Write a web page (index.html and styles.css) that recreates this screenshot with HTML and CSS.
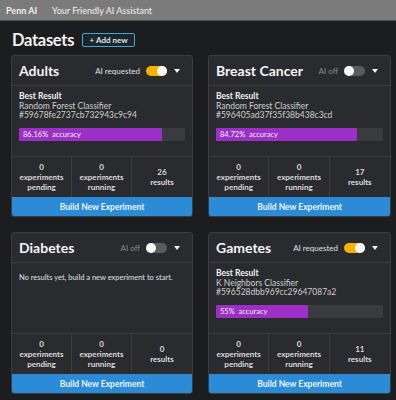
FILE: index.html
```html
<!DOCTYPE html>
<html lang="en">
  <head>
    <meta charset="UTF-8" />
    <meta name="viewport" content="width=device-width, initial-scale=1.0" />
    <title>Penn AI - Datasets</title>
    <link rel="stylesheet" href="styles.css">
  </head>
  <body>
    <div class="topbar">
      <span class="brand">Penn AI</span>
      <span class="tagline">Your Friendly AI Assistant</span>
    </div>
    <div class="page-head">
      <h1>Datasets</h1>
      <button class="add-btn">+ Add new</button>
    </div>
    <div class="grid">
      <div class="card">
        <div class="card-head">
          <span class="title">Adults</span>
          <span class="ai-label">AI requested</span>
          <span class="toggle on"><span class="knob"></span></span>
          <span class="caret"></span>
        </div>
        <div class="card-body">
          <div class="best">Best Result</div>
          <div class="line">Random Forest Classifier</div>
          <div class="line">#59678fe2737cb732943c9c94</div>
          <div class="bar"><div class="fill" style="width: 86.16%">86.16%&nbsp; accuracy</div></div>
        </div>
        <div class="stats">
          <div class="stat">0<br />experiments<br />pending</div>
          <div class="stat">0<br />experiments<br />running</div>
          <div class="stat">26<br />results</div>
        </div>
        <button class="build-btn">Build New Experiment</button>
      </div>

      <div class="card">
        <div class="card-head">
          <span class="title">Breast Cancer</span>
          <span class="ai-label off">AI off</span>
          <span class="toggle"><span class="knob"></span></span>
          <span class="caret"></span>
        </div>
        <div class="card-body">
          <div class="best">Best Result</div>
          <div class="line">Random Forest Classifier</div>
          <div class="line">#596405ad37f35f38b438c3cd</div>
          <div class="bar"><div class="fill" style="width: 84.72%">84.72%&nbsp; accuracy</div></div>
        </div>
        <div class="stats">
          <div class="stat">0<br />experiments<br />pending</div>
          <div class="stat">0<br />experiments<br />running</div>
          <div class="stat">17<br />results</div>
        </div>
        <button class="build-btn">Build New Experiment</button>
      </div>

      <div class="card">
        <div class="card-head">
          <span class="title">Diabetes</span>
          <span class="ai-label off">AI off</span>
          <span class="toggle"><span class="knob"></span></span>
          <span class="caret"></span>
        </div>
        <div class="card-body">
          <div class="empty">No results yet, build a new experiment to start.</div>
        </div>
        <div class="stats">
          <div class="stat">0<br />experiments<br />pending</div>
          <div class="stat">0<br />experiments<br />running</div>
          <div class="stat">0<br />results</div>
        </div>
        <button class="build-btn">Build New Experiment</button>
      </div>

      <div class="card">
        <div class="card-head">
          <span class="title">Gametes</span>
          <span class="ai-label">AI requested</span>
          <span class="toggle on"><span class="knob"></span></span>
          <span class="caret"></span>
        </div>
        <div class="card-body">
          <div class="best">Best Result</div>
          <div class="line">K Neighbors Classifier</div>
          <div class="line">#596528dbb969cc29647087a2</div>
          <div class="bar"><div class="fill" style="width: 55%">55%&nbsp; accuracy</div></div>
        </div>
        <div class="stats">
          <div class="stat">0<br />experiments<br />pending</div>
          <div class="stat">0<br />experiments<br />running</div>
          <div class="stat">11<br />results</div>
        </div>
        <button class="build-btn">Build New Experiment</button>
      </div>
    </div>
  </body>
</html>
```

FILE: styles.css
```css
* {
  margin: 0;
  padding: 0;
  box-sizing: border-box;
}
body {
  background-color: #1c1d1f;
  color: #e6e6e6;
  font-family: Lato, "Open Sans", sans-serif;
}
.topbar {
  height: 21px;
  background-color: #7b7b7b;
  border-bottom: 1px solid #505050;
  display: flex;
  align-items: center;
  font-size: 9px;
  color: #f0f0f0;
}
.brand {
  font-weight: bold;
  padding-left: 6px;
  width: 52px;
}
.page-head {
  display: flex;
  align-items: center;
  padding: 4px 0 0 12px;
  height: 34px;
}
h1 {
  font-size: 16.5px;
  font-weight: bold;
  letter-spacing: -0.3px;
  color: #f2f2f2;
}
.add-btn {
  margin-left: 8px;
  height: 14px;
  width: 53px;
  background-color: #1c252b;
  border: 1.5px solid #4ba3cf;
  border-radius: 2px;
  color: #d4eaf5;
  font-family: Lato, sans-serif;
  font-size: 8px;
  font-weight: bold;
}
.grid {
  display: grid;
  grid-template-columns: 182px 183px;
  column-gap: 15px;
  row-gap: 15px;
  padding: 0 0 0 11px;
}
.card {
  background-color: #2a2b2e;
  border: 1px solid #3b3c3f;
  border-radius: 3px;
  display: flex;
  flex-direction: column;
}
.card-head {
  height: 30px;
  display: flex;
  align-items: center;
  padding: 0 12px 0 7px;
  border-bottom: 1px solid #3b3c3f;
}
.title {
  font-size: 14px;
  font-weight: bold;
  color: #f4f4f4;
  flex: 1;
}
.ai-label {
  font-size: 8px;
  color: #e0e0e0;
  margin-right: 6px;
}
.ai-label.off {
  color: #8a8a8a;
}
.toggle {
  width: 21px;
  height: 10px;
  border-radius: 5px;
  background-color: #5c5c5e;
  display: flex;
  align-items: center;
}
.toggle.on {
  background-color: #f5b300;
  justify-content: flex-end;
}
.knob {
  width: 10px;
  height: 10px;
  border-radius: 50%;
  background-color: #fafafa;
}
.caret {
  margin-left: 7px;
  border-left: 3.5px solid transparent;
  border-right: 3.5px solid transparent;
  border-top: 4px solid #f0f0f0;
}
.card-body {
  height: 70px;
  padding: 6px 7px 0;
  font-size: 8.5px;
  line-height: 9.5px;
}
.best {
  font-weight: bold;
  color: #f2f2f2;
}
.line {
  color: #cfcfcf;
}
.bar {
  margin-top: 7px;
  height: 13px;
  background-color: #3a3b3e;
  border-radius: 1px;
}
.fill {
  height: 100%;
  background-color: #9b2fc6;
  color: #f2f2f2;
  font-size: 7.5px;
  line-height: 13px;
  padding-left: 4px;
  white-space: nowrap;
  border-radius: 1px;
}
.empty {
  color: #e0e0e0;
  font-size: 7.5px;
  padding-top: 4px;
  white-space: nowrap;
}
.stats {
  height: 41px;
  display: grid;
  grid-template-columns: 1fr 1fr 1fr;
  border-top: 1px solid #3b3c3f;
}
.stat {
  display: flex;
  align-items: center;
  justify-content: center;
  text-align: center;
  font-size: 8px;
  line-height: 10px;
  font-weight: bold;
  color: #dcdcdc;
  border-right: 1px solid #3b3c3f;
}
.stat:last-child {
  border-right: none;
}
.build-btn {
  height: 19px;
  border: none;
  background-color: #2b8bd7;
  color: #eef5fb;
  font-family: Lato, sans-serif;
  font-size: 8.5px;
  font-weight: bold;
  border-radius: 0 0 2px 2px;
}
```
